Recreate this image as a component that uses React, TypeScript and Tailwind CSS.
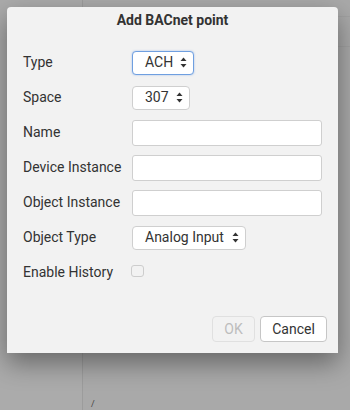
import { useState } from "react"

function Arrows() {
  return (
    <svg width="7" height="11" viewBox="0 0 7 11" className="shrink-0">
      <path d="M3.5 0.5 L6.5 4 H0.5 Z" fill="#333" />
      <path d="M3.5 10.5 L6.5 7 H0.5 Z" fill="#333" />
    </svg>
  )
}

function Select({ value, width, focused }: { value: string; width: string; focused?: boolean }) {
  return (
    <div
      className={`${width} h-[24px] flex items-center justify-between pl-[12px] pr-[6px] bg-white rounded-[4px] border text-[14px] text-[#333] ${
        focused ? "border-[#6f9fe0] shadow-[0_0_2px_rgba(80,140,230,0.5)]" : "border-[#cfcfcf]"
      }`}
    >
      <span>{value}</span>
      <Arrows />
    </div>
  )
}

function TextInput() {
  return <div className="w-[190px] h-[26px] bg-white border border-[#cfcfcf] rounded-[3px]" />
}

function Row({ label, children }: { label: string; children: React.ReactNode }) {
  return (
    <div className="h-[35px] flex items-center">
      <div className="w-[109px] shrink-0 text-[14px] text-[#333]">{label}</div>
      {children}
    </div>
  )
}

export default function App() {
  const [history, setHistory] = useState(false)

  return (
    <div className="relative w-[350px] h-[410px] overflow-hidden flex bg-[#a8a8a8] font-['Roboto','Liberation_Sans',sans-serif]">
      {/* page behind the modal */}
      <div className="w-[83px] h-full bg-[#ababab] border-r border-[#9c9c9c]" />
      <div className="flex-1 h-full flex flex-col bg-[#a9a9a9]">
        <div className="h-[17px] border-b border-[#a2a2a2]" />
        <div className="h-[30px] border-b border-[#a2a2a2]" />
        <div className="flex-1" />
        <div className="pl-[8px] pb-[1px] text-[9px] leading-[9px] text-[#444]">/</div>
      </div>

      {/* dialog */}
      <div className="absolute left-[7px] top-[7px] w-[331px] h-[346px] bg-[#f2f2f2] rounded-t-[4px] shadow-[0_10px_26px_rgba(0,0,0,0.4)] flex flex-col">
        <div className="pt-[3px] h-[37px] text-center text-[14px] leading-[20px] font-bold text-[#333]">
          Add BACnet point
        </div>
        <div className="px-[16px] pt-[1px] flex flex-col">
          <Row label="Type">
            <Select value="ACH" width="w-[62px]" focused />
          </Row>
          <Row label="Space">
            <Select value="307" width="w-[58px]" />
          </Row>
          <Row label="Name">
            <TextInput />
          </Row>
          <Row label="Device Instance">
            <TextInput />
          </Row>
          <Row label="Object Instance">
            <TextInput />
          </Row>
          <Row label="Object Type">
            <Select value="Analog Input" width="w-[114px]" />
          </Row>
          <Row label="Enable History">
            <button
              onClick={() => setHistory(!history)}
              className="ml-[-1px] mt-[-3px] w-[13px] h-[12px] rounded-[3px] border border-[#cdcdcd] bg-[#f2f2f2]"
            />
          </Row>
        </div>
        <div className="flex-1" />
        <div className="flex justify-end gap-[5px] pr-[11px] pb-[11px]">
          <button
            disabled
            className="w-[43px] h-[26px] rounded-[4px] border border-[#e0e0e0] bg-[#f2f2f2] text-[14px] text-[#bdbdbd]"
          >
            OK
          </button>
          <button className="w-[67px] h-[26px] rounded-[4px] border border-[#c6c6c6] bg-white text-[14px] text-[#333]">
            Cancel
          </button>
        </div>
      </div>
    </div>
  )
}
